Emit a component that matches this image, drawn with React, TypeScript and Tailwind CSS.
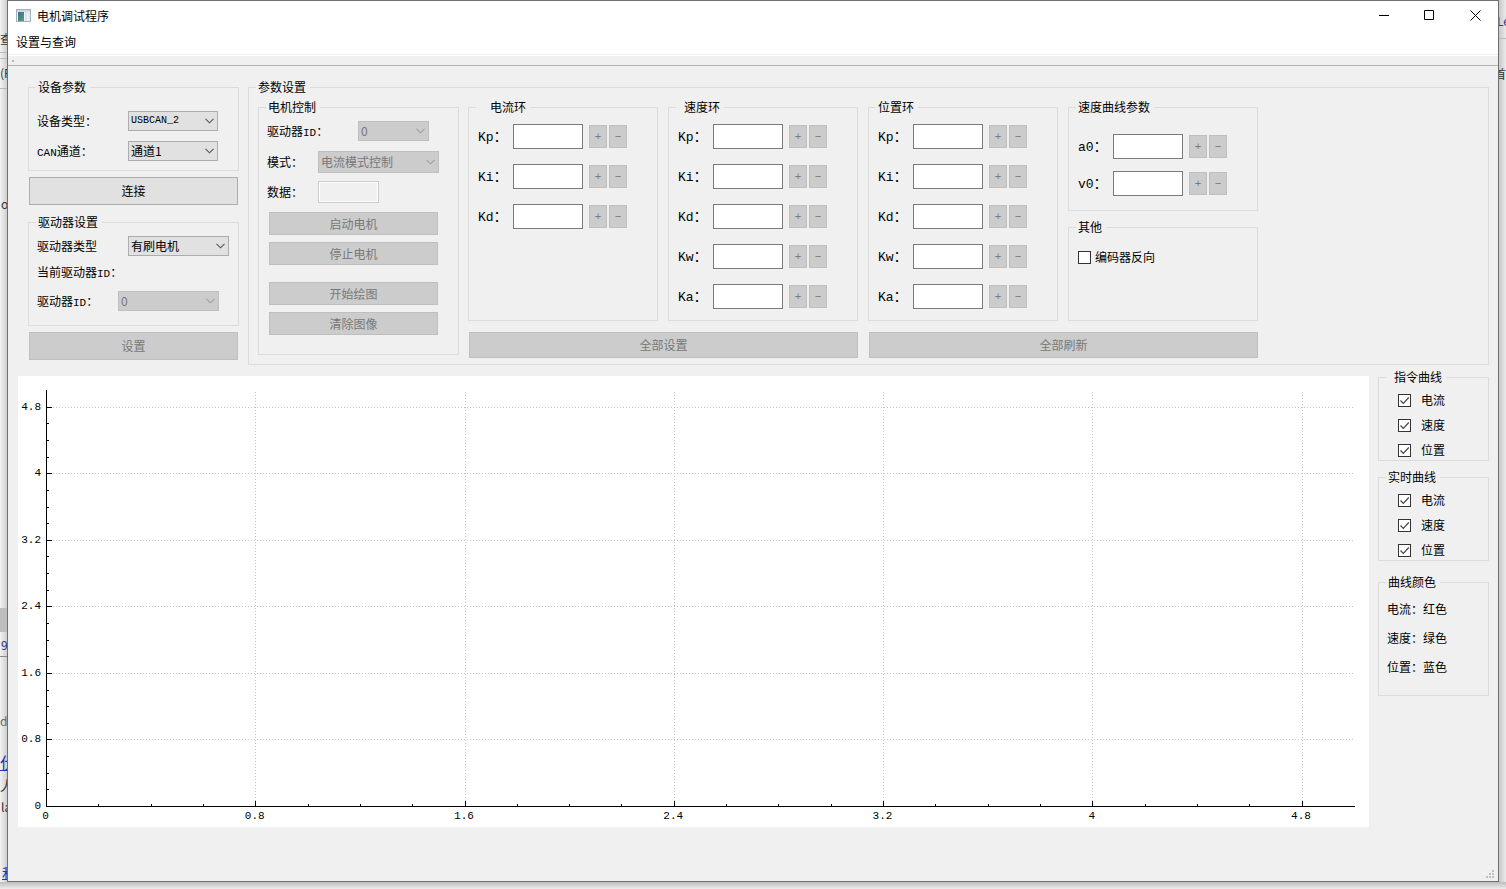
import { useState } from "react";
import type { ReactNode } from "react";

function Latin({ children }: { children: ReactNode }) {
  return <span className="font-['Liberation_Mono',monospace] text-[11px] leading-none">{children}</span>;
}

function Group({ title, className, legendClass = "pr-1 pl-[2px]", children }: {
  title: string; className: string; legendClass?: string; children: ReactNode;
}) {
  return (
    <fieldset className={`min-w-0 border border-[#dcdcdc] px-[7px] ${className}`}>
      <legend className={`leading-4 ${legendClass}`}>{title}</legend>
      {children}
    </fieldset>
  );
}

function Combo({ id, options, className, disabled = false }: {
  id: string; options: string[]; className: string; disabled?: boolean;
}) {
  return (
    <div className={`relative shrink-0 ${className}`}>
      <select
        id={id}
        disabled={disabled}
        className="block size-full appearance-none rounded-none border border-[#adadad] bg-[#e1e1e1] pl-[2px] leading-4 text-black opacity-100 disabled:border-[#bfbfbf] disabled:bg-[#cccccc] disabled:text-[#787878]"
      >
        {options.map((o) => <option key={o}>{o}</option>)}
      </select>
      <svg viewBox="0 0 9 6" className={`pointer-events-none absolute top-1/2 right-1 h-[6px] w-[9px] -translate-y-1/2 ${disabled ? "text-[#a0a0a0]" : "text-[#555555]"}`}>
        <path d="M0.5 0.8 4.5 4.8 8.5 0.8" fill="none" stroke="currentColor" strokeWidth="1.1" />
      </svg>
    </div>
  );
}

function PushButton({ children, className, disabled = false }: { children: ReactNode; className: string; disabled?: boolean }) {
  return (
    <button
      type="button"
      disabled={disabled}
      className={`block border border-[#adadad] bg-[#e1e1e1] text-center leading-4 disabled:border-[#bfbfbf] disabled:bg-[#cccccc] disabled:text-[#787878] ${className}`}
    >
      {children}
    </button>
  );
}

function GainRow({ group, name }: { group: string; name: string }) {
  const id = `${group}-${name}`;
  return (
    <div className="flex h-[25px] items-center">
      <label htmlFor={id} className="w-[35px] shrink-0 whitespace-nowrap text-sm leading-4">
        <span className="font-['Liberation_Mono',monospace] text-[13px]">{name}</span>：
      </label>
      <input id={id} type="text" className="h-[25px] w-[70px] border border-[#7a7a7a] bg-white px-1" />
      <PushButton disabled className="ml-[6px] h-[23px] w-[18px] font-['Liberation_Mono',monospace] text-[11px]">+</PushButton>
      <PushButton disabled className="ml-[2px] h-[23px] w-[18px] font-['Liberation_Mono',monospace] text-[11px]">−</PushButton>
    </div>
  );
}

function Check({ label, initial, gap }: { label: string; initial: boolean; gap: string }) {
  const [on, setOn] = useState(initial);
  return (
    <label className={`flex h-4 items-center leading-4 ${gap}`}>
      <span className="relative block size-[13px]">
        <input
          type="checkbox"
          checked={on}
          onChange={() => setOn(!on)}
          className="block size-[13px] appearance-none border border-[#333333] bg-white"
        />
        {on && (
          <svg viewBox="0 0 13 13" className="pointer-events-none absolute inset-0 size-[13px]">
            <path d="M2.5 6.5 5.3 9.3 10.8 3.5" fill="none" stroke="#444444" strokeWidth="1.2" />
          </svg>
        )}
      </span>
      {label}
    </label>
  );
}

const X0 = 28.5;
const Y0 = 430.5;
const X_STEP = 209.25;
const Y_STEP = 66.55;
const TICKS = ["0", "0.8", "1.6", "2.4", "3.2", "4", "4.8"];
const snap = (v: number) => Math.floor(v) + 0.5;

function Plot() {
  const minor = Array.from({ length: 25 }, (_, i) => i);
  return (
    <svg viewBox="0 0 1351 451" className="block h-auto w-full bg-white font-['Liberation_Mono',monospace] text-[11px]" role="img" aria-label="曲线图">
      <g stroke="#c4c4c4" strokeDasharray="1 2">
        {TICKS.slice(1).map((t, i) => {
          const x = snap(X0 + (i + 1) * X_STEP);
          const y = snap(Y0 - (i + 1) * Y_STEP);
          return (
            <g key={t}>
              <line x1={x} x2={x} y1="16" y2="430" />
              <line x1="35" x2="1336" y1={y} y2={y} />
            </g>
          );
        })}
      </g>
      <g stroke="#000000">
        <line x1={X0} x2={X0} y1="14" y2="431" />
        <line x1="28" x2="1337" y1={Y0} y2={Y0} />
        {minor.map((i) => {
          const x = snap(X0 + (i * X_STEP) / 4);
          const y = snap(Y0 - (i * Y_STEP) / 4);
          const len = i % 4 === 0 ? 5 : 2;
          return (
            <g key={i}>
              <line x1={x} x2={x} y1="430" y2={430 - len} />
              <line x1="29" x2={29 + len} y1={y} y2={y} />
            </g>
          );
        })}
      </g>
      <g fill="#000000">
        {TICKS.map((t, i) => (
          <g key={t}>
            <text x={X0 - 1 + i * X_STEP} y="443" textAnchor="middle">{t}</text>
            <text x="23" y={Math.floor(Y0 - i * Y_STEP) + 3} textAnchor="end">{t}</text>
          </g>
        ))}
      </g>
    </svg>
  );
}

function Backdrop() {
  return (
    <div aria-hidden="true" className="absolute inset-0 overflow-hidden bg-[#e4e4e4] text-[#333333]">
      <div className="absolute inset-y-0 left-0 w-[7px] bg-gradient-to-r from-[#f2f2f2] to-[#cfcfcf]" />
      <div className="absolute inset-y-0 right-0 w-[7px] bg-gradient-to-l from-[#ebebeb] to-[#c8c8c8]" />
      <div className="absolute inset-x-0 bottom-0 h-[7px] bg-gradient-to-t from-[#ededed] to-[#bdbdbd]" />
      <div className="absolute top-[52px] left-0 h-px w-[7px] bg-[#bbbbbb]" />
      <div className="absolute top-[58px] left-0 h-px w-[7px] bg-[#bbbbbb]" />
      <div className="absolute top-[88px] left-0 h-px w-[7px] bg-[#bbbbbb]" />
      <div className="absolute top-[38px] right-0 h-px w-[7px] bg-[#bbbbbb]" />
      <div className="absolute top-[608px] left-0 h-6 w-[7px] bg-[#bdbdbd]" />
      <div className="absolute top-[656px] left-0 h-px w-[7px] bg-[#8a8a8a]" />
      <span className="absolute top-[31px] left-0">查</span>
      <span className="absolute top-[65px] left-0">(F</span>
      <span className="absolute top-[196px] left-px">o</span>
      <span className="absolute top-[637px] left-px text-[#1f2f6b]">9</span>
      <span className="absolute top-[713px] left-0 text-[#666666]">d</span>
      <span className="absolute top-[754px] left-0 text-base leading-4 text-[#2233aa] underline">仕</span>
      <span className="absolute top-[777px] left-0 text-sm leading-4">人</span>
      <span className="absolute top-[799px] left-px">la</span>
      <span className="absolute top-[864px] left-[2px] text-sm leading-4 text-[#2233aa] underline">和</span>
      <span className="absolute top-[13px] right-[-4px] text-[#3a3f63]">Le</span>
      <span className="absolute top-[66px] right-0">首</span>
    </div>
  );
}

export default function App() {
  return (
    <div className="relative flex min-h-screen flex-col p-[7px] pt-0 font-['Noto_Sans_CJK_SC',sans-serif] text-xs leading-4 text-black">
      <Backdrop />
      <div className="relative flex flex-1 flex-col border border-[#707070] bg-[#f0f0f0]">
        <header className="flex h-[29px] items-center bg-white pl-2">
          <svg viewBox="0 0 16 14" className="h-[14px] w-4">
            <defs>
              <linearGradient id="pane" x1="0" y1="0" x2="1" y2="1">
                <stop offset="0" stopColor="#3c6f9c" />
                <stop offset="1" stopColor="#4fa36b" />
              </linearGradient>
            </defs>
            <rect x="0.5" y="0.5" width="14" height="12" fill="#f4f6f7" stroke="#a6b0b8" />
            <rect x="1" y="1" width="13" height="2" fill="#cfd8df" />
            <rect x="2" y="3" width="6" height="9" fill="url(#pane)" />
            <rect x="9" y="3" width="2" height="9" fill="#dbe2e7" />
            <rect x="12" y="3" width="2" height="9" fill="#e6ebee" />
          </svg>
          <h1 className="ml-[5px] flex-1">电机调试程序</h1>
          <button type="button" aria-label="最小化" className="flex h-full w-[44px] items-center justify-center">
            <svg viewBox="0 0 11 11" className="size-[11px]"><path d="M0 5.5H10" stroke="#000" /></svg>
          </button>
          <button type="button" aria-label="最大化" className="flex h-full w-[46px] items-center justify-center">
            <svg viewBox="0 0 11 11" className="size-[11px]"><path d="M0.5 0.5H9.5V9.5H0.5Z" fill="none" stroke="#000" /></svg>
          </button>
          <button type="button" aria-label="关闭" className="flex h-full w-[46px] items-center justify-center">
            <svg viewBox="0 0 11 11" className="size-[11px]"><path d="M0.5 0.5 10.5 10.5M10.5 0.5 0.5 10.5" stroke="#000" /></svg>
          </button>
        </header>
        <nav className="flex h-[25px] items-center border-b border-[#f0f0f0] bg-white pl-2">
          <button type="button">设置与查询</button>
        </nav>
        <div className="flex h-[11px] items-center border-t border-b border-t-white border-b-[#b4b4b4] pl-[4px]">
          <span className="block size-[2px] bg-[#b8b8b8]" />
        </div>

        <main className="flex-1 pr-[9px] pl-[10px]">
          <div className="flex gap-[9px] pt-[13px] pl-[10px]">
            <div className="w-[211px] shrink-0">
              <Group title="设备参数" className="h-[92px] pt-4">
                <div className="flex flex-col gap-[10px] pl-px">
                  <div className="flex h-5 items-center">
                    <label htmlFor="device-type" className="w-[91px]">设备类型：</label>
                    <Combo id="device-type" options={["USBCAN_2", "USBCAN_1"]} className="h-5 w-[90px] font-['Liberation_Mono',monospace] text-[10px]" />
                  </div>
                  <div className="flex h-5 items-center">
                    <label htmlFor="can-channel" className="w-[91px]"><Latin>CAN</Latin>通道：</label>
                    <Combo id="can-channel" options={["通道1", "通道2"]} className="h-5 w-[90px]" />
                  </div>
                </div>
              </Group>
              <div className="px-px pt-[6px]"><PushButton className="h-7 w-full">连接</PushButton></div>
              <Group title="驱动器设置" className="mt-[9px] h-[112px] pt-[6px]">
                <div className="pl-px">
                  <div className="flex h-5 items-center">
                    <label htmlFor="driver-type" className="w-[91px]">驱动器类型</label>
                    <Combo id="driver-type" options={["有刷电机", "无刷电机"]} className="h-5 w-[101px]" />
                  </div>
                  <p className="mt-2 h-4">当前驱动器<Latin>ID</Latin>：</p>
                  <div className="mt-[11px] flex h-5 items-center">
                    <label htmlFor="driver-id" className="w-[81px]">驱动器<Latin>ID</Latin>：</label>
                    <Combo id="driver-id" disabled options={["0"]} className="h-5 w-[101px]" />
                  </div>
                </div>
              </Group>
              <div className="px-px pt-[6px]"><PushButton disabled className="h-7 w-full">设置</PushButton></div>
            </div>

            <Group title="参数设置" className="flex-1 pt-1 pb-[6px]">
              <div className="flex gap-[9px] pl-[2px]">
                <Group title="电机控制" className="h-[256px] w-[201px] pt-[6px]">
                  <div className="pl-px">
                    <div className="flex h-5 items-center">
                      <label htmlFor="motor-driver-id" className="w-[91px]">驱动器<Latin>ID</Latin>：</label>
                      <Combo id="motor-driver-id" disabled options={["0"]} className="h-5 w-[71px]" />
                    </div>
                    <div className="mt-[10px] flex h-[22px] items-center">
                      <label htmlFor="motor-mode" className="w-[51px]">模式：</label>
                      <Combo id="motor-mode" disabled options={["电流模式控制"]} className="h-[22px] w-[121px]" />
                    </div>
                    <div className="mt-2 flex h-[22px] items-center">
                      <label htmlFor="motor-data" className="w-[51px]">数据：</label>
                      <input id="motor-data" disabled type="text" className="h-[22px] w-[61px] border border-[#cccccc] bg-[#f0f0f0] px-1 inset-ring inset-ring-white" />
                    </div>
                    <div className="pl-[2px]">
                      <PushButton disabled className="mt-[9px] h-[23px] w-[169px]">启动电机</PushButton>
                      <PushButton disabled className="mt-[7px] h-[23px] w-[169px]">停止电机</PushButton>
                      <PushButton disabled className="mt-[17px] h-[23px] w-[169px]">开始绘图</PushButton>
                      <PushButton disabled className="mt-[7px] h-[23px] w-[169px]">清除图像</PushButton>
                    </div>
                  </div>
                </Group>

                <div>
                  <div className="flex gap-[10px]">
                    <Group title="电流环" legendClass="pr-1 pl-[14px]" className="h-[222px] w-[190px] pt-[9px]">
                      <div className="flex flex-col gap-[15px] pl-[2px]">
                        {["Kp", "Ki", "Kd"].map((n) => <GainRow key={n} group="current" name={n} />)}
                      </div>
                    </Group>
                    <Group title="速度环" legendClass="pr-1 pl-2" className="h-[222px] w-[190px] pt-[9px]">
                      <div className="flex flex-col gap-[15px] pl-[2px]">
                        {["Kp", "Ki", "Kd", "Kw", "Ka"].map((n) => <GainRow key={n} group="speed" name={n} />)}
                      </div>
                    </Group>
                    <Group title="位置环" className="h-[222px] w-[190px] pt-[9px]">
                      <div className="flex flex-col gap-[15px] pl-[2px]">
                        {["Kp", "Ki", "Kd", "Kw", "Ka"].map((n) => <GainRow key={n} group="position" name={n} />)}
                      </div>
                    </Group>
                    <div className="w-[190px]">
                      <Group title="速度曲线参数" className="h-[112px] pt-[19px]">
                        <div className="flex flex-col gap-3 pl-[2px]">
                          <GainRow group="profile" name="a0" />
                          <GainRow group="profile" name="v0" />
                        </div>
                      </Group>
                      <Group title="其他" className="mt-2 h-[102px] pt-[14px]">
                        <div className="pl-[2px]"><Check label="编码器反向" initial={false} gap="gap-1" /></div>
                      </Group>
                    </div>
                  </div>
                  <div className="flex gap-[11px] pt-[11px] pl-px">
                    <PushButton disabled className="h-[26px] flex-1">全部设置</PushButton>
                    <PushButton disabled className="h-[26px] flex-1">全部刷新</PushButton>
                  </div>
                </div>
              </div>
            </Group>
          </div>

          <div className="flex items-start gap-[9px] pt-1">
            <div className="min-w-0 flex-1 pt-[7px]"><Plot /></div>
            <div className="w-[111px] shrink-0">
              <Group title="指令曲线" legendClass="pr-1 pl-2" className="h-[92px] pt-[7px]">
                <div className="flex flex-col gap-[9px] pl-3">
                  {["电流", "速度", "位置"].map((n) => <Check key={n} label={n} initial gap="gap-[10px]" />)}
                </div>
              </Group>
              <Group title="实时曲线" className="mt-2 h-[92px] pt-[7px]">
                <div className="flex flex-col gap-[9px] pl-3">
                  {["电流", "速度", "位置"].map((n) => <Check key={n} label={n} initial gap="gap-[10px]" />)}
                </div>
              </Group>
              <Group title="曲线颜色" className="mt-[13px] h-[122px] pt-[11px]">
                <div className="flex flex-col gap-[13px] pl-px">
                  <p>电流：红色</p>
                  <p>速度：绿色</p>
                  <p>位置：蓝色</p>
                </div>
              </Group>
            </div>
          </div>
        </main>

        <footer className="flex justify-end pr-[3px] pb-[2px]">
          <svg viewBox="0 0 9 9" className="size-[9px]" fill="#bfbfbf">
            <path d="M6 0h2v2h-2zM3 3h2v2h-2zM6 3h2v2h-2zM0 6h2v2h-2zM3 6h2v2h-2zM6 6h2v2h-2z" />
          </svg>
        </footer>
      </div>
    </div>
  );
}
